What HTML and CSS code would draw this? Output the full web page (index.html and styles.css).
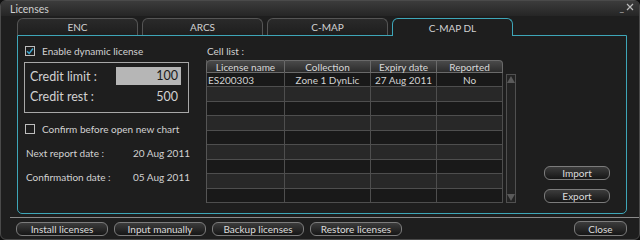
FILE: index.html
```html
<!DOCTYPE html>
<html lang="en">
<head>
    <meta charset="UTF-8">
    <title>Licenses</title>
    <link rel="stylesheet" href="styles.css">
</head>
<body>
    <div class="window">
        <div class="titlebar">
            <span class="title">Licenses</span>
            <span class="winctl">_<svg width="8" height="8" viewBox="0 0 8 8"><path d="M1 1L7 7M7 1L1 7" stroke="#bbb" stroke-width="1.2"/></svg></span>
        </div>
        <div class="tabs">
            <div class="tab">ENC</div>
            <div class="tab">ARCS</div>
            <div class="tab">C-MAP</div>
            <div class="tab active">C-MAP DL</div>
        </div>
        <div class="panel">
            <div class="left">
                <label class="check-row">
                    <span class="checkbox checked"><svg width="8" height="8" viewBox="0 0 8 8"><path d="M1 4.2L3.2 6.4L7 1.5" fill="none" stroke="#3ea6d0" stroke-width="1.5"/></svg></span>
                    Enable dynamic license
                </label>
                <div class="credit-box">
                    <div class="credit-row">
                        <span>Credit limit :</span>
                        <span class="credit-input">100</span>
                    </div>
                    <div class="credit-row">
                        <span>Credit rest :</span>
                        <span class="credit-value">500</span>
                    </div>
                </div>
                <label class="check-row confirm">
                    <span class="checkbox"></span>
                    Confirm before open new chart
                </label>
                <div class="date-row first">
                    <span class="date-label">Next report date :</span>
                    <span>20 Aug 2011</span>
                </div>
                <div class="date-row">
                    <span class="date-label">Confirmation date :</span>
                    <span>05 Aug 2011</span>
                </div>
            </div>
            <div class="right">
                <div class="cell-label">Cell list :</div>
                <div class="cell-area">
                    <div class="grid">
                        <div class="hd">License name</div>
                        <div class="hd">Collection</div>
                        <div class="hd">Expiry date</div>
                        <div class="hd">Reported</div>

                        <div class="c odd name">ES200303</div>
                        <div class="c odd">Zone 1 DynLic</div>
                        <div class="c odd">27 Aug 2011</div>
                        <div class="c odd">No</div>

                        <div class="c"></div><div class="c"></div><div class="c"></div><div class="c"></div>
                        <div class="c odd"></div><div class="c odd"></div><div class="c odd"></div><div class="c odd"></div>
                        <div class="c"></div><div class="c"></div><div class="c"></div><div class="c"></div>
                        <div class="c odd"></div><div class="c odd"></div><div class="c odd"></div><div class="c odd"></div>
                        <div class="c"></div><div class="c"></div><div class="c"></div><div class="c"></div>
                        <div class="c odd"></div><div class="c odd"></div><div class="c odd"></div><div class="c odd"></div>
                        <div class="c"></div><div class="c"></div><div class="c"></div><div class="c"></div>
                        <div class="c odd"></div><div class="c odd"></div><div class="c odd"></div><div class="c odd"></div>
                    </div>
                    <div class="scrollbar">
                        <svg width="8" height="8" viewBox="0 0 8 8"><path d="M0 8L4 1L8 8Z" fill="#5a5a5a"/></svg>
                        <svg width="8" height="8" viewBox="0 0 8 8"><path d="M0 0L4 7L8 0Z" fill="#5a5a5a"/></svg>
                    </div>
                    <div class="side-buttons">
                        <button class="btn">Import</button>
                        <button class="btn">Export</button>
                    </div>
                </div>
            </div>
        </div>
        <div class="footer">
            <button class="btn wide">Install licenses</button>
            <button class="btn wide">Input manually</button>
            <button class="btn wide">Backup licenses</button>
            <button class="btn wide">Restore licenses</button>
            <button class="btn close">Close</button>
        </div>
    </div>
</body>
</html>
```

FILE: styles.css
```css
body {
    margin: 0;
    background: #101010;
    font-family: Lato, "Noto Sans", sans-serif;
    font-size: 10px;
    color: #d2d2d2;
}
.window {
    width: 638px;
    height: 238px;
    border: 1px solid #4a4a4a;
    border-radius: 6px;
    background: #1e1e1e;
    display: flex;
    flex-direction: column;
    overflow: hidden;
}
.titlebar {
    height: 15px;
    display: flex;
    align-items: center;
    justify-content: space-between;
    padding: 0 5px 0 9px;
    background: linear-gradient(#3c3c3c, #252525);
}
.title {
    color: #d0d0d0;
    font-size: 10.5px;
}
.winctl {
    display: flex;
    align-items: center;
    gap: 2px;
    color: #bbb;
    margin-top: -3px;
}
.tabs {
    display: flex;
    gap: 4px;
    margin: 2px 0 0 16px;
    height: 17px;
    position: relative;
    z-index: 1;
}
.tab {
    width: 121px;
    height: 17px;
    box-sizing: border-box;
    border: 1px solid #555;
    border-bottom: none;
    border-radius: 6px 6px 0 0;
    background: linear-gradient(#2a2a2a, #1e1e1e);
    display: flex;
    align-items: center;
    justify-content: center;
}
.tab.active {
    border: 1px solid #3ea6b8;
    border-bottom: none;
    background: #1e1e1e;
    height: 18px;
}
.panel {
    margin: 0 12px 0 16px;
    height: 179px;
    box-sizing: border-box;
    border: 1px solid #3ea6b8;
    border-radius: 0 0 5px 5px;
    display: flex;
    padding: 9px 0 0 6px;
}
.left {
    width: 182px;
    display: flex;
    flex-direction: column;
}
.check-row {
    height: 12px;
    display: flex;
    align-items: center;
    gap: 7px;
    padding-left: 1px;
}
.check-row.confirm {
    margin-top: 10px;
}
.checkbox {
    width: 8px;
    height: 8px;
    border: 1px solid #bdbdbd;
    display: flex;
    align-items: center;
    justify-content: center;
}
.credit-box {
    margin-top: 5px;
    width: 165px;
    height: 51px;
    box-sizing: border-box;
    border: 1px solid #a8a8a8;
    padding: 3px 7px 0 5px;
    font-size: 12.5px;
}
.credit-row {
    height: 20px;
    display: flex;
    align-items: center;
    justify-content: space-between;
}
.credit-input {
    width: 65px;
    height: 18px;
    box-sizing: border-box;
    background: #b6b6b6;
    color: #1a1a1a;
    text-align: right;
    padding-right: 3px;
    line-height: 18px;
}
.credit-value {
    padding-right: 3px;
}
.date-row {
    height: 14px;
    display: flex;
    align-items: center;
    margin-top: 10px;
    padding-left: 2px;
}
.date-row.first {
    margin-top: 11px;
}
.date-label {
    width: 107px;
}
.right {
    display: flex;
    flex-direction: column;
}
.cell-label {
    height: 12px;
    line-height: 12px;
    margin-bottom: 3px;
    padding-left: 1px;
}
.cell-area {
    display: flex;
}
.grid {
    display: grid;
    grid-template-columns: 78px 86px 66px 66px;
    grid-template-rows: 13px repeat(9, 1fr);
    height: 143px;
    width: 296px;
    border-left: 1px solid #555;
    box-sizing: border-box;
}
.hd {
    background: linear-gradient(#4a4a4a, #2c2c2c);
    border: 1px solid #6a6a6a;
    border-left: none;
    display: flex;
    align-items: center;
    justify-content: center;
    color: #d8d8d8;
}
.hd:first-child {
    border-radius: 4px 0 0 0;
    border-left: 1px solid #6a6a6a;
    margin-left: -1px;
}
.hd:nth-child(4) {
    border-radius: 0 4px 0 0;
}
.c {
    background: #282828;
    border-right: 1px solid #4e4e4e;
    border-bottom: 1px solid #4e4e4e;
    display: flex;
    align-items: center;
    justify-content: center;
}
.c.odd {
    background: #191919;
}
.c.name {
    justify-content: flex-start;
    padding-left: 1px;
}
.scrollbar {
    margin: 14px 0 0 4px;
    width: 10px;
    height: 129px;
    box-sizing: border-box;
    border: 1px solid #505050;
    background: #232323;
    display: flex;
    flex-direction: column;
    justify-content: space-between;
    align-items: center;
}
.side-buttons {
    margin-left: 28px;
    display: flex;
    flex-direction: column;
    justify-content: flex-end;
    gap: 9px;
}
.btn {
    font-family: Lato, "Noto Sans", sans-serif;
    font-size: 10px;
    color: #dcdcdc;
    height: 14px;
    padding: 0;
    border: 1px solid #7c7c7c;
    border-radius: 6px;
    background: linear-gradient(#3c3c3c, #161616);
    line-height: 12px;
}
.side-buttons .btn {
    width: 66px;
}
.footer {
    margin: 3px 0 0 9px;
    border-top: 1px solid #8a8a8a;
    padding: 4px 12px 0 6px;
    display: flex;
    gap: 6px;
}
.btn.wide {
    width: 92px;
}
.btn.close {
    width: 53px;
    margin-left: auto;
    margin-top: -1px;
    height: 15px;
}
```
